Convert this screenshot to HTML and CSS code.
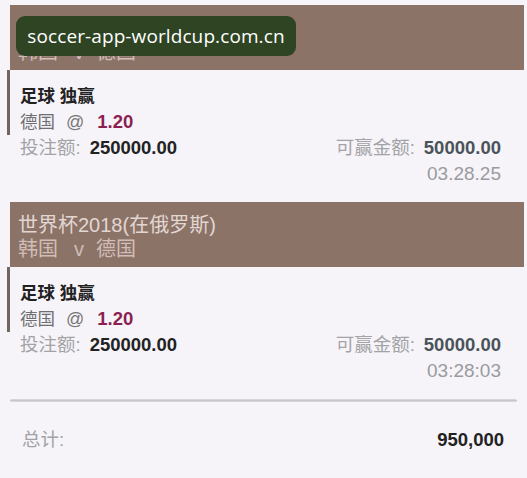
FILE: index.html
```html
<!DOCTYPE html>
<html lang="zh-CN">
<head>
<meta charset="utf-8">
<title>投注记录</title>
<link rel="stylesheet" href="styles.css">
</head>
<body>
<div class="page">
  <div class="bet">
    <div class="head">
      <div class="league">世界杯2018(在俄罗斯)</div>
      <div class="match">韩国<span class="vs">v</span>德国</div>
    </div>
    <div class="sel">
      <div class="market">足球 独赢</div>
      <div class="pick"><span class="team">德国</span><span class="at">@</span><span class="odds">1.20</span></div>
    </div>
    <div class="stake">
      <div><span class="lbl">投注额:</span><span class="amt">250000.00</span></div>
      <div><span class="lbl">可赢金额:</span><span class="win">50000.00</span></div>
    </div>
    <div class="time">03.28.25</div>
  </div>

  <div class="bet">
    <div class="head">
      <div class="league">世界杯2018(在俄罗斯)</div>
      <div class="match">韩国<span class="vs">v</span>德国</div>
    </div>
    <div class="sel">
      <div class="market">足球 独赢</div>
      <div class="pick"><span class="team">德国</span><span class="at">@</span><span class="odds">1.20</span></div>
    </div>
    <div class="stake">
      <div><span class="lbl">投注额:</span><span class="amt">250000.00</span></div>
      <div><span class="lbl">可赢金额:</span><span class="win">50000.00</span></div>
    </div>
    <div class="time">03:28:03</div>
  </div>

  <div class="sep"></div>
  <div class="total">
    <span class="lbl">总计:</span>
    <span class="sum">950,000</span>
  </div>
</div>
<div class="watermark">soccer-app-worldcup.com.cn</div>
</body>
</html>
```
FILE: styles.css
```css
html, body {
  margin: 0;
  padding: 0;
}
body {
  background: #f6f4f9;
  font-family: "Liberation Sans", "Noto Sans CJK SC", sans-serif;
  color: #222;
  width: 527px;
  height: 478px;
  overflow: hidden;
  position: relative;
}
.page {
  padding: 5px 3px 0 10px;
}
.bet {
  margin-bottom: 15px;
}
.head {
  background: #8b7367;
  height: 65px;
  box-sizing: border-box;
  padding: 11px 8px 0 8px;
  line-height: 24px;
  font-size: 20px;
}
.league {
  color: #e2d6d2;
}
.match {
  color: #d2bcb7;
}
.vs {
  margin: 0 12px 0 16px;
}
.sel {
  margin-left: -3px;
  border-left: 3px solid #6f6561;
  padding: 13px 0 0 10px;
  line-height: 26px;
}
.market {
  font-size: 17.5px;
  font-weight: bold;
  color: #222;
}
.pick {
  font-size: 17.5px;
}
.team {
  color: #6f6f72;
}
.at {
  color: #777;
  margin: 0 13px 0 11px;
  font-size: 18px;
}
.odds {
  color: #8c1f52;
  font-weight: bold;
  font-size: 18.5px;
}
.stake {
  display: flex;
  justify-content: space-between;
  padding: 0 23px 0 10px;
  line-height: 26px;
  font-size: 18.5px;
}
.lbl {
  color: #a3a3a6;
  margin-right: 9px;
}
.amt {
  font-weight: bold;
  font-size: 18.5px;
  color: #222;
}
.win {
  font-weight: bold;
  font-size: 18.5px;
  color: #4a5359;
}
.time {
  text-align: right;
  padding-right: 23px;
  line-height: 26px;
  font-size: 19px;
  color: #9a9ba0;
}
.sep {
  margin: 3px 7px 0 0;
  height: 3px;
  background: linear-gradient(#dcdce2, #c6c6cc, #dcdce2);
  border-radius: 2px;
}
.total {
  display: flex;
  justify-content: space-between;
  margin-top: 25px;
  padding: 0 20px 0 12px;
  line-height: 26px;
  font-size: 18.5px;
}
.sum {
  font-weight: bold;
  font-size: 18.5px;
  color: #222;
}
.watermark {
  position: absolute;
  left: 16px;
  top: 16px;
  width: 280px;
  height: 40px;
  border-radius: 9px;
  background: #2e4423;
  color: #ffffff;
  font-family: "Open Sans", "Noto Sans", sans-serif;
  font-size: 19px;
  line-height: 40px;
  text-align: center;
  letter-spacing: 0.1px;
}
```
